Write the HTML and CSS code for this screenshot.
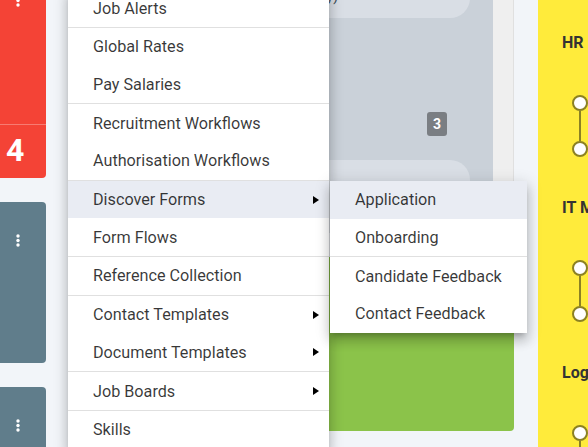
FILE: index.html
```html
<!DOCTYPE html>
<html lang="en">
<head>
<meta charset="utf-8">
<title>Board</title>
<link rel="stylesheet" href="styles.css">
</head>
<body>
<div class="board">
  <div class="col col-left">
    <div class="card card-red">
      <svg class="kebab" width="4" height="14" viewBox="0 0 4 14"><circle cx="2" cy="2" r="1.7"/><circle cx="2" cy="6.5" r="1.7"/><circle cx="2" cy="11" r="1.7"/></svg>
      <div class="card-spacer"></div>
      <div class="card-rule"></div>
      <div class="card-count">4</div>
    </div>
    <div class="card card-slate">
      <svg class="kebab" width="4" height="14" viewBox="0 0 4 14"><circle cx="2" cy="2" r="1.7"/><circle cx="2" cy="6.5" r="1.7"/><circle cx="2" cy="11" r="1.7"/></svg>
    </div>
    <div class="card card-slate card-tall">
      <svg class="kebab" width="4" height="14" viewBox="0 0 4 14"><circle cx="2" cy="2" r="1.7"/><circle cx="2" cy="6.5" r="1.7"/><circle cx="2" cy="11" r="1.7"/></svg>
    </div>
  </div>

  <div class="col col-mid">
    <div class="stage-panel">
      <div class="stage-list">
        <div class="stage stage-a"><span class="stage-title">Final Stage Interview (Hiring Company)</span></div>
        <div class="stage-gap"><span class="badge">3</span></div>
        <div class="stage stage-b"></div>
      </div>
      <div class="stage-track"></div>
    </div>
    <div class="card-green"></div>
  </div>

  <div class="col col-right">
    <div class="lane">
      <div class="lane-title">HR</div>
      <div class="steps"><span class="dot"></span><span class="link"></span><span class="dot"></span></div>
    </div>
    <div class="lane">
      <div class="lane-title">IT Management</div>
      <div class="steps"><span class="dot"></span><span class="link"></span><span class="dot"></span></div>
    </div>
    <div class="lane">
      <div class="lane-title">Logistics</div>
      <div class="steps"><span class="dot"></span><span class="link"></span><span class="dot"></span></div>
    </div>
  </div>
</div>

<div class="menu">
  <div class="menu-item">Job Alerts</div>
  <div class="menu-divider"></div>
  <div class="menu-item">Global Rates</div>
  <div class="menu-item">Pay Salaries</div>
  <div class="menu-divider"></div>
  <div class="menu-item">Recruitment Workflows</div>
  <div class="menu-item">Authorisation Workflows</div>
  <div class="menu-divider"></div>
  <div class="menu-item is-active">Discover Forms<span class="caret"></span></div>
  <div class="menu-item">Form Flows</div>
  <div class="menu-divider"></div>
  <div class="menu-item">Reference Collection</div>
  <div class="menu-divider"></div>
  <div class="menu-item">Contact Templates<span class="caret"></span></div>
  <div class="menu-item">Document Templates<span class="caret"></span></div>
  <div class="menu-divider"></div>
  <div class="menu-item">Job Boards<span class="caret"></span></div>
  <div class="menu-divider"></div>
  <div class="menu-item">Skills</div>
</div>

<div class="menu submenu">
  <div class="menu-item is-active">Application</div>
  <div class="menu-item">Onboarding</div>
  <div class="menu-divider"></div>
  <div class="menu-item">Candidate Feedback</div>
  <div class="menu-item">Contact Feedback</div>
</div>
</body>
</html>
```

FILE: styles.css
```css
* { box-sizing: border-box; }

html, body {
  margin: 0;
  padding: 0;
}

body {
  width: 588px;
  height: 447px;
  overflow: hidden;
  position: relative;
  background: #f2f5f9;
  font-family: Roboto, "Noto Sans", "Liberation Sans", sans-serif;
}

.board {
  display: flex;
  gap: 24px;
  height: 447px;
  margin-left: -10px;
  align-items: flex-start;
}

/* left column */
.col-left {
  flex: 0 0 56px;
  display: flex;
  flex-direction: column;
  gap: 24px;
  margin-top: -38px;
}

.card {
  border-radius: 4px;
  display: flex;
  flex-direction: column;
  align-items: center;
  padding-top: 32px;
}

.card-red { background: #f44336; height: 216px; }
.card-slate { background: #607d8b; height: 161px; }
.card-tall { height: 200px; }

.kebab { fill: #ffffff; display: block; }

.card-spacer { flex: 1; }

.card-rule {
  align-self: stretch;
  height: 1px;
  background: rgba(255, 255, 255, 0.3);
}

.card-count {
  align-self: stretch;
  height: 53px;
  padding: 9px 0 0 16px;
  color: #ffffff;
  font-weight: 700;
  font-size: 32px;
  line-height: 32px;
}

/* middle column */
.col-mid {
  flex: 0 0 444px;
  display: flex;
  flex-direction: column;
  gap: 24px;
  margin-top: -40px;
}

.stage-panel {
  display: flex;
  background: #efefef;
  border-right: 1px solid #e0e0e0;
}

.stage-list {
  flex: 1;
  background: #cad1d9;
  padding-right: 23px;
  display: flex;
  flex-direction: column;
}

.stage-track { flex: 0 0 20px; }

.stage { background: #d9dee5; }

.stage-a {
  height: 58px;
  border-radius: 0 0 20px 20px;
  display: flex;
  align-items: flex-end;
  padding: 0 0 12px 26px;
}

.stage-title {
  font-size: 14px;
  line-height: 20px;
  color: #37474f;
  white-space: nowrap;
}

.stage-gap {
  height: 142px;
  display: flex;
  justify-content: flex-end;
  align-items: flex-end;
  padding: 0 23px 24px 0;
}

.badge {
  width: 20px;
  height: 24px;
  border-radius: 3px;
  background: #7a7e83;
  color: #ffffff;
  font-weight: 700;
  font-size: 14px;
  line-height: 24px;
  text-align: center;
}

.stage-b {
  height: 73px;
  border-radius: 20px 20px 0 0;
}

.card-green {
  height: 174px;
  background: #8bc34a;
  border-radius: 4px;
}

/* right column */
.col-right {
  flex: 0 0 100px;
  align-self: stretch;
  background: #ffeb3b;
  padding: 32.5px 0 0 24px;
}

.lane { height: 165px; }

.lane-title {
  font-weight: 700;
  font-size: 16px;
  line-height: 20px;
  color: #333333;
  white-space: nowrap;
}

.steps {
  display: flex;
  flex-direction: column;
  margin-top: 42.5px;
  padding-left: 10px;
}

.dot {
  width: 16px;
  height: 16px;
  border-radius: 50%;
  border: 2px solid #8b8124;
  background: #ffffff;
}

.link {
  width: 2px;
  height: 30px;
  margin-left: 7px;
  background: #8b8124;
}

/* menus */
.menu {
  position: absolute;
  top: -10.7px;
  left: 68px;
  width: 261px;
  background: #ffffff;
  box-shadow: 0 5px 5px -3px rgba(0, 0, 0, 0.2), 0 8px 10px 1px rgba(0, 0, 0, 0.14), 0 3px 14px 2px rgba(0, 0, 0, 0.12);
}

.submenu {
  top: 181px;
  left: 330px;
  width: 197px;
}

.menu-item {
  height: 37.7px;
  display: flex;
  align-items: center;
  padding: 0 10px 0 25px;
  font-size: 16.2px;
  color: rgba(0, 0, 0, 0.78);
  white-space: nowrap;
}

.menu-item.is-active { background: #e9ecf3; }

.menu-divider {
  height: 1px;
  background: #e0e0e0;
}

.caret {
  margin-left: auto;
  width: 0;
  height: 0;
  border-left: 6px solid #000000;
  border-top: 4px solid transparent;
  border-bottom: 4px solid transparent;
}
```
